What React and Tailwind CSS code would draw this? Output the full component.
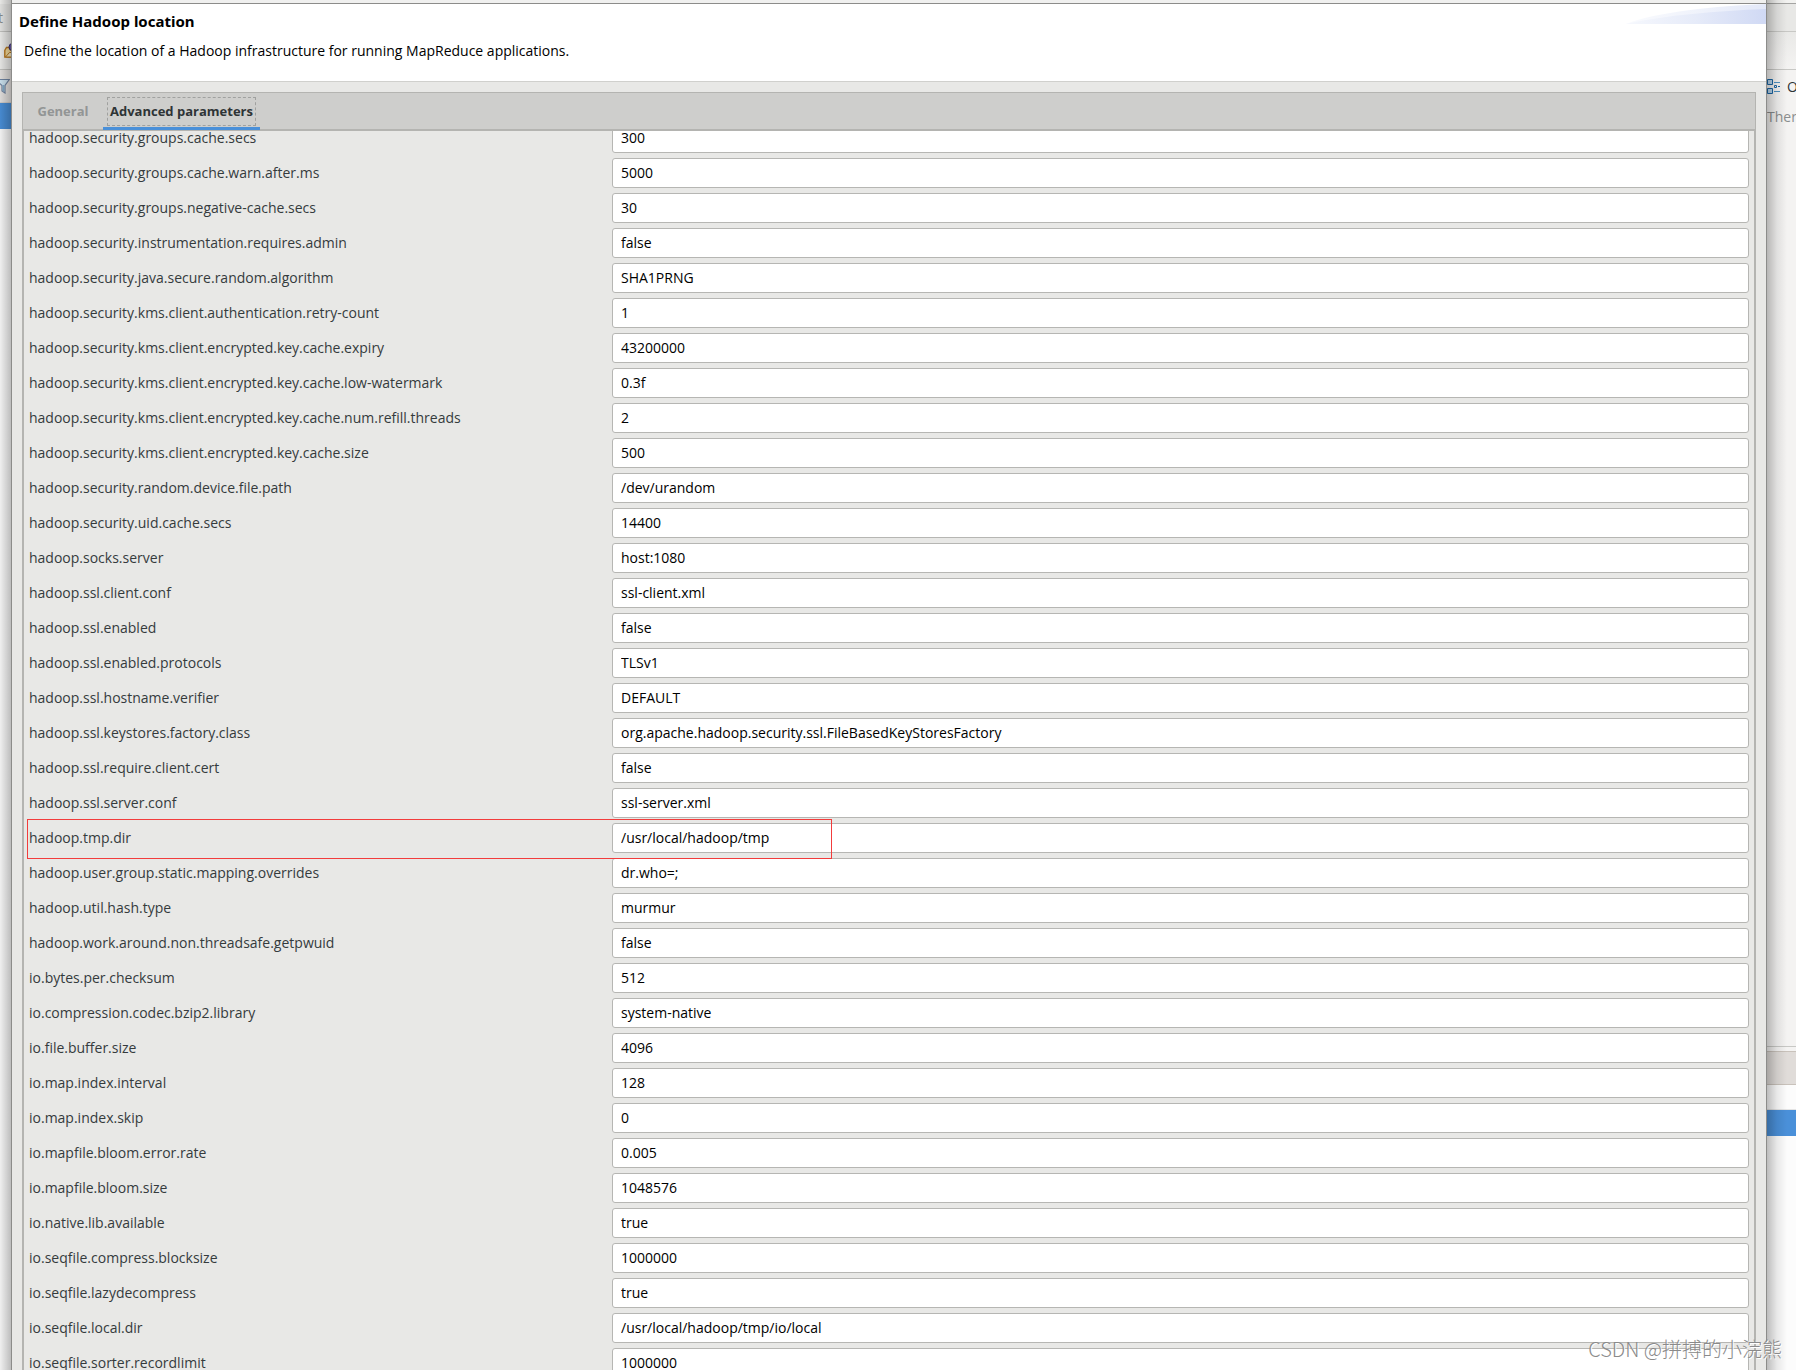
import React, { useState } from "react";

const parameters = [
  ["hadoop.security.groups.cache.secs", "300"],
  ["hadoop.security.groups.cache.warn.after.ms", "5000"],
  ["hadoop.security.groups.negative-cache.secs", "30"],
  ["hadoop.security.instrumentation.requires.admin", "false"],
  ["hadoop.security.java.secure.random.algorithm", "SHA1PRNG"],
  ["hadoop.security.kms.client.authentication.retry-count", "1"],
  ["hadoop.security.kms.client.encrypted.key.cache.expiry", "43200000"],
  ["hadoop.security.kms.client.encrypted.key.cache.low-watermark", "0.3f"],
  ["hadoop.security.kms.client.encrypted.key.cache.num.refill.threads", "2"],
  ["hadoop.security.kms.client.encrypted.key.cache.size", "500"],
  ["hadoop.security.random.device.file.path", "/dev/urandom"],
  ["hadoop.security.uid.cache.secs", "14400"],
  ["hadoop.socks.server", "host:1080"],
  ["hadoop.ssl.client.conf", "ssl-client.xml"],
  ["hadoop.ssl.enabled", "false"],
  ["hadoop.ssl.enabled.protocols", "TLSv1"],
  ["hadoop.ssl.hostname.verifier", "DEFAULT"],
  ["hadoop.ssl.keystores.factory.class", "org.apache.hadoop.security.ssl.FileBasedKeyStoresFactory"],
  ["hadoop.ssl.require.client.cert", "false"],
  ["hadoop.ssl.server.conf", "ssl-server.xml"],
  ["hadoop.tmp.dir", "/usr/local/hadoop/tmp"],
  ["hadoop.user.group.static.mapping.overrides", "dr.who=;"],
  ["hadoop.util.hash.type", "murmur"],
  ["hadoop.work.around.non.threadsafe.getpwuid", "false"],
  ["io.bytes.per.checksum", "512"],
  ["io.compression.codec.bzip2.library", "system-native"],
  ["io.file.buffer.size", "4096"],
  ["io.map.index.interval", "128"],
  ["io.map.index.skip", "0"],
  ["io.mapfile.bloom.error.rate", "0.005"],
  ["io.mapfile.bloom.size", "1048576"],
  ["io.native.lib.available", "true"],
  ["io.seqfile.compress.blocksize", "1000000"],
  ["io.seqfile.lazydecompress", "true"],
  ["io.seqfile.local.dir", "/usr/local/hadoop/tmp/io/local"],
  ["io.seqfile.sorter.recordlimit", "1000000"],
];

const HIGHLIGHTED = "hadoop.tmp.dir";

const PackageIcon = () => (
  <svg className="h-4 w-4 shrink-0" viewBox="0 0 16 16" fill="none">
    <path d="M.8 14V7.500L2.500 4.500H5L6.500 7H13V14Z" fill="#f7dc9a" stroke="#b9791f" strokeWidth="1.400" />
    <path d="M1.500 14L5.500 9.500H15L11 14Z" fill="#fbe9bd" stroke="#b9791f" />
    <circle cx="8.500" cy="4" r="3.500" fill="#6a5aac" stroke="#3c3178" />
  </svg>
);

const FilterIcon = () => (
  <svg className="-ml-1.5 h-4 w-4 shrink-0" viewBox="0 0 16 16" fill="none">
    <path d="M1 1.500H15.300L11 7.500V15L8 13V7.500Z" fill="#cfe6f3" stroke="#7286a3" strokeWidth="1.200" />
    <path d="M9.500 7V13" stroke="#7fb0cc" />
  </svg>
);

const OutlineIcon = () => (
  <svg className="h-4 w-3.5 shrink-0" viewBox="0 0 14 16" fill="none">
    <path d="M.5 .5H5.500V5.500H.5ZM.5 9.500H5.500V14.500H.5Z" fill="#b9d7ee" stroke="#1a66a6" />
    <path d="M7 3.500H13M7 12.500H13" stroke="#4f93c4" />
    <path d="M7.500 6.500H9.500V8.500H7.500ZM11 7.500H13" stroke="#1a66a6" />
  </svg>
);

const LeftStrip = () => (
  <div className="relative flex w-[11px] shrink-0 flex-col overflow-hidden bg-[#fcfcfc]">
    <div className="h-1 bg-[#f2f2f0]" />
    <div className="flex h-7 items-center border-b border-[#c4c4c1] bg-[#e8e8e6] text-sm text-[#8b8e8f]">
      <span className="-ml-0.5">t</span>
    </div>
    <div className="flex h-[38px] items-center border-b border-[#c4c4c1] bg-[#eeeeec] pl-1">
      <PackageIcon />
    </div>
    <div className="flex h-[33px] items-center border-b border-[#d5d0cc] bg-[#e6e3e1]">
      <FilterIcon />
    </div>
    <div className="h-[26px] bg-[#4a90d9]" />
    <div className="absolute inset-0 bg-linear-to-r from-black/5 to-black/25" />
  </div>
);

const RightStrip = () => (
  <div className="relative flex w-[29px] shrink-0 flex-col overflow-hidden bg-[#fcfcfc]">
    <div className="h-1 border-b border-[#a4a4a2] bg-[#f2f2f0]" />
    <div className="h-7 border-b border-[#c8c8c5] bg-[#e8e8e6]" />
    <div className="h-[38px] border-b border-[#c8c8c5] bg-linear-to-b from-[#e9e9e7] to-[#f4f3f2]" />
    <div className="flex h-[977px] flex-col border-b border-[#c8c8c5] bg-[#f4f3f2] pt-[5px] text-sm leading-5 whitespace-nowrap">
      <div className="flex h-6 items-center gap-1.5 text-[#2e3436]">
        <OutlineIcon />
        <span>Outline</span>
      </div>
      <p className="mt-2 text-[#8b8e8f]">There is no active editor</p>
    </div>
    <div className="h-1 bg-[#f4f3f2]" />
    <div className="h-[34px] border-y border-[#c9c2bb] bg-[#e0dcd9]" />
    <div className="h-[25px] border-b border-[#e4e4e4]" />
    <div className="h-[26px] bg-[#4a90d9]" />
    <div className="absolute inset-y-0 left-0 w-5 bg-linear-to-r from-black/25 via-black/8 to-transparent" />
  </div>
);

const Header = () => (
  <header className="relative h-[78px] border-b border-[#d0d0cd] bg-white pt-[7px] text-black">
    <h1 className="pl-[7px] font-['Noto_Sans',sans-serif] text-[15px] leading-5 font-bold">
      Define Hadoop location
    </h1>
    <p className="mt-2.5 pl-3 text-sm leading-5">
      Define the location of a Hadoop infrastructure for running MapReduce applications.
    </p>
    <svg className="absolute top-0 right-0 h-5 w-[140px]" viewBox="0 0 140 20">
      <defs>
        <linearGradient id="swoosh" x1="0" x2="1">
          <stop offset="0" stopColor="#f6f8fd" />
          <stop offset="0.5" stopColor="#e6ebf9" />
          <stop offset="1" stopColor="#d0d9f4" />
        </linearGradient>
      </defs>
      <path d="M0 20C30 8 90 2 140 0V20Z" fill="url(#swoosh)" opacity="0.6" />
      <path d="M0 20C40 11 90 7 140 5V20Z" fill="url(#swoosh)" />
    </svg>
  </header>
);

const ParameterRow = ({ name, value, onChange }) => (
  <div className="relative grid h-[30px] grid-cols-[583px_1fr] items-center">
    <label htmlFor={name} className="text-[#353b3d]">
      {name}
    </label>
    <input
      type="text"
      id={name}
      value={value}
      onChange={e => onChange(name, e.target.value)}
      className="h-[30px] w-full rounded-[3px] border border-[#b6b6b3] bg-white px-2 pb-0.5 text-black outline-none"
    />
    {name === HIGHLIGHTED && (
      <div className="pointer-events-none absolute -top-1 -bottom-1.5 -left-0.5 z-10 w-[805px] border border-[#f23c3c]" />
    )}
  </div>
);

const App = () => {
  const [values, setValues] = useState(Object.fromEntries(parameters));
  const [tab, setTab] = useState("advanced");

  const handleChange = (name, value) => {
    setValues(prev => ({ ...prev, [name]: value }));
  };

  return (
    <div className="relative flex h-screen overflow-hidden font-['Open_Sans','Noto_Sans',sans-serif] text-sm">
      <LeftStrip />

      <main className="flex min-w-0 flex-1 flex-col overflow-hidden border-x border-[#8c8c8a] bg-[#e8e8e6]">
        <div className="h-1 shrink-0 border-b border-[#8c8c8a] bg-[#f0f0ef]" />
        <Header />

        <div className="mx-2.5 mt-2.5 flex min-h-0 flex-1 flex-col">
          <div
            role="tablist"
            className="flex h-[39px] shrink-0 border border-b-2 border-[#b4b4b1] bg-[#cececc] text-[13px] font-bold"
          >
            <button
              type="button"
              role="tab"
              aria-selected={tab === "general"}
              onClick={() => setTab("general")}
              className="h-9 w-20 text-[#929595]"
            >
              General
            </button>
            <button
              type="button"
              role="tab"
              aria-selected={tab === "advanced"}
              onClick={() => setTab("advanced")}
              className="flex h-[37px] items-end justify-center border-b-3 border-[#4a90d9] px-1 pb-px text-[#2e3436]"
            >
              <span className="flex h-[29px] items-center border border-dashed border-[#a0a19f] px-0.5">
                Advanced parameters
              </span>
            </button>
          </div>

          <div className="min-h-0 flex-1 overflow-hidden border-x-2 border-[#b4b4b1] px-[5px]">
            <form className="-mt-2 flex flex-col gap-[5px]">
              {parameters.map(([name]) => (
                <ParameterRow key={name} name={name} value={values[name]} onChange={handleChange} />
              ))}
            </form>
          </div>
        </div>
      </main>

      <RightStrip />

      <p className="pointer-events-none absolute right-3.5 bottom-[7px] z-20 font-['Noto_Sans_CJK_SC',sans-serif] text-xl leading-7 font-light text-[#8a8a8a] [text-shadow:1px_1px_0_#ffffff]">
        CSDN @拼搏的小浣熊
      </p>
    </div>
  );
};

export default App;
